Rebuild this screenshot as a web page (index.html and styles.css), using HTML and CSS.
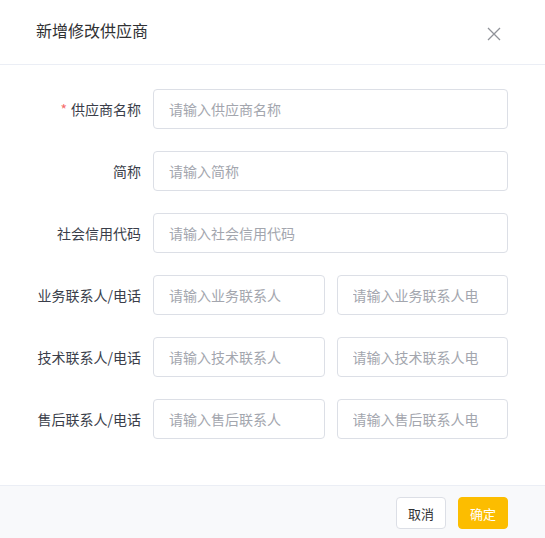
FILE: index.html
```html
<!DOCTYPE html>
<html lang="zh">
<head>
<meta charset="utf-8">
<link rel="stylesheet" href="styles.css">
</head>
<body>
<div class="dialog">
  <div class="header">
    <span class="title">新增修改供应商</span>
    <button class="close" aria-label="close">
      <svg width="14" height="14" viewBox="0 0 14 14"><path d="M1 1L13 13M13 1L1 13" stroke="#909399" stroke-width="1.3" fill="none"/></svg>
    </button>
  </div>
  <div class="body">
    <div class="row">
      <label class="label"><span class="req">*</span>供应商名称</label>
      <div class="controls"><input class="input" placeholder="请输入供应商名称"></div>
    </div>
    <div class="row">
      <label class="label">简称</label>
      <div class="controls"><input class="input" placeholder="请输入简称"></div>
    </div>
    <div class="row">
      <label class="label">社会信用代码</label>
      <div class="controls"><input class="input" placeholder="请输入社会信用代码"></div>
    </div>
    <div class="row">
      <label class="label">业务联系人/电话</label>
      <div class="controls"><input class="input" placeholder="请输入业务联系人"><input class="input" placeholder="请输入业务联系人电话"></div>
    </div>
    <div class="row">
      <label class="label">技术联系人/电话</label>
      <div class="controls"><input class="input" placeholder="请输入技术联系人"><input class="input" placeholder="请输入技术联系人电话"></div>
    </div>
    <div class="row">
      <label class="label">售后联系人/电话</label>
      <div class="controls"><input class="input" placeholder="请输入售后联系人"><input class="input" placeholder="请输入售后联系人电话"></div>
    </div>
  </div>
  <div class="footer">
    <button class="btn">取消</button>
    <button class="btn primary">确定</button>
  </div>
</div>
</body>
</html>
```
FILE: styles.css
```css
* { box-sizing: border-box; }
html, body { margin: 0; padding: 0; background: #fff; }
body {
  font-family: "Noto Sans CJK SC", "Noto Sans", sans-serif;
  color: #606266;
}
.dialog { width: 545px; }
.header {
  height: 65px;
  border-bottom: 1px solid #ebeef5;
  display: flex;
  align-items: flex-start;
  justify-content: space-between;
  padding: 19px 44px 0 36px;
}
.title {
  font-size: 16px;
  line-height: 22px;
  color: #303133;
}
.close {
  border: none;
  background: none;
  padding: 0;
  margin-top: 8px;
  width: 14px;
  height: 14px;
  display: flex;
}
.body {
  padding: 24px 37px 24px 20px;
}
.row {
  display: flex;
  align-items: center;
  margin-bottom: 22px;
}
.label {
  flex: 0 0 121px;
  margin-right: 12px;
  text-align: right;
  font-size: 14px;
  color: #3a3e4a;
  white-space: nowrap;
}
.req { color: #f56c6c; margin-right: 4px; }
.controls {
  flex: 1 1 0;
  min-width: 0;
  display: flex;
  gap: 12px;
}
.input {
  flex: 1 1 0;
  width: 0;
  min-width: 0;
  height: 40px;
  border: 1px solid #dcdfe6;
  border-radius: 4px;
  padding: 0 28px 0 15px;
  font-family: inherit;
  font-size: 14px;
  color: #606266;
  outline: none;
}
.input::placeholder { color: #a3a6ae; }
.footer {
  border-top: 1px solid #ebeef5;
  background: #f8f9fb;
  height: 53px;
  padding: 11px 37px 0 0;
  display: flex;
  justify-content: flex-end;
  align-items: flex-start;
  gap: 12px;
}
.btn {
  height: 32px;
  width: 50px;
  padding: 0;
  border: 1px solid #dcdfe6;
  border-radius: 4px;
  background: #fff;
  color: #303133;
  font-family: inherit;
  font-size: 13px;
}
.btn.primary {
  background: #fcbd00;
  border-color: #fcbd00;
  color: #fff;
}
```
